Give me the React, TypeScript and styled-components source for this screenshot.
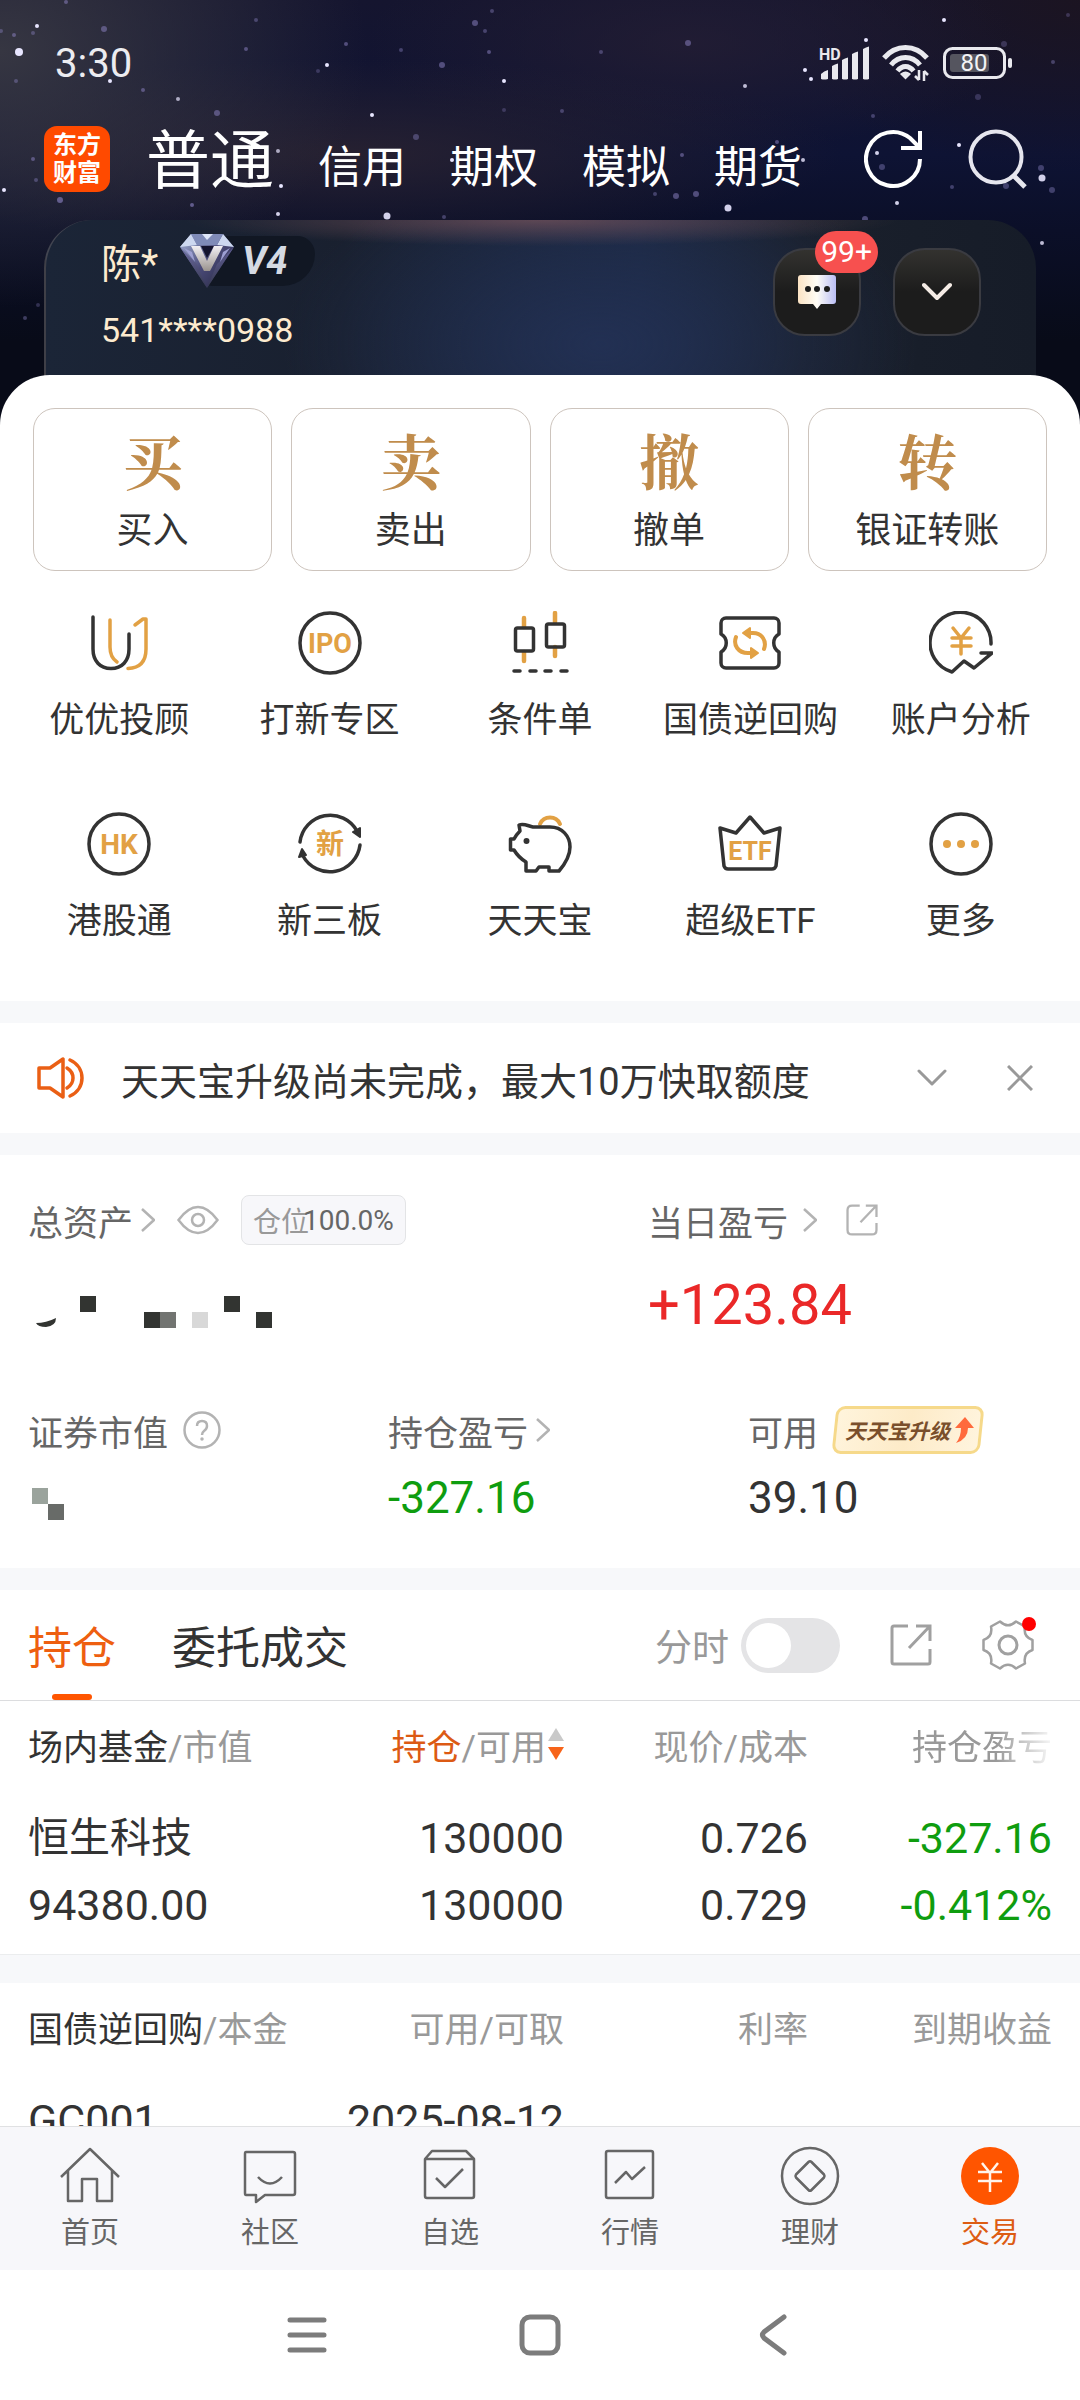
import React from "react";
import styled, { createGlobalStyle, css } from "styled-components";

const INK = "#333333";
const GREY = "#666666";
const MUTED = "#999999";
const BRAND = "#ff5500";
const ACCENT = "#e2a144";
const BAND = "#f7f8fa";

const GlobalStyle = createGlobalStyle`
  *, *::before, *::after { box-sizing: border-box; }
  body {
    margin: 0;
    background: #ffffff;
    color: ${INK};
    font-family: Roboto, "Noto Sans CJK SC", sans-serif;
  }
  button {
    padding: 0;
    border: 0;
    background: none;
    color: inherit;
    font: inherit;
    cursor: pointer;
  }
  a { color: inherit; text-decoration: none; }
  svg { display: block; flex: none; }
`;

/* ---------- page frame ---------- */

const Screen = styled.div`
  display: flex;
  flex-direction: column;
  height: 100vh;
  overflow: hidden;
`;

const Scroll = styled.main`
  flex: 1;
  min-height: 0;
  overflow-y: auto;
  scrollbar-width: none;
  background: ${BAND};
`;

/* ---------- hero ---------- */

const Hero = styled.header`
  position: relative;
  padding-bottom: 52px;
  background:
    radial-gradient(ellipse 34% 60% at 0% 12%, rgba(58, 58, 68, 0.9), transparent),
    radial-gradient(ellipse 46% 22% at 32% 36%, rgba(44, 36, 48, 0.8), transparent),
    radial-gradient(ellipse 30% 26% at 64% 10%, rgba(36, 30, 52, 0.8), transparent),
    radial-gradient(ellipse 30% 40% at 100% 0%, rgba(28, 20, 32, 0.9), transparent),
    linear-gradient(180deg, #15152f 0%, #0e1334 36%, #0b0f28 54%, #080b18 80%);
`;

const Sky = styled.svg`
  position: absolute;
  inset: 0;
  width: 100%;
`;

const StatusBar = styled.div`
  position: relative;
  display: flex;
  align-items: center;
  justify-content: space-between;
  height: 110px;
  padding: 16px 67px 0 55px;
  color: #ececf0;
  font-size: 40px;
`;

const StatusIcons = styled.div`
  display: flex;
  align-items: center;
  gap: 13px;
`;

const TopNav = styled.nav`
  position: relative;
  display: flex;
  align-items: center;
  height: 110px;
  padding: 0 52px 12px 44px;
`;

const Logo = styled.div`
  display: grid;
  place-content: center;
  width: 66px;
  height: 66px;
  border-radius: 13px;
  background: #ff4a00;
  color: #ffffff;
  font-size: 24px;
  font-weight: 700;
  line-height: 28px;
`;

const TopTabs = styled.div`
  display: flex;
  align-items: baseline;
  gap: 44px;
  margin-left: 36px;
  padding-top: 12px;
`;

const TopTab = styled.button<{ $active?: boolean }>`
  color: #ffffff;
  font-size: ${(p) => (p.$active ? 64 : 44)}px;
  line-height: 80px;
`;

const TopActions = styled.div`
  display: flex;
  gap: 44px;
  margin-left: auto;
`;

const AccountCard = styled.section`
  position: relative;
  display: flex;
  justify-content: space-between;
  height: 207px;
  margin: 0 44px -52px;
  padding: 14px 55px 0 55px;
  border-left: 2px solid rgba(140, 130, 130, 0.35);
  border-radius: 48px 48px 0 0;
  background:
    radial-gradient(ellipse 36% 26px at 50% 0%, rgba(120, 84, 92, 0.7), transparent),
    radial-gradient(ellipse 32% 90% at 56% 60%, #223053, transparent),
    linear-gradient(90deg, #1b2537, #19202f 30%, #1b2740 60%, #1a202c 76%, #161c28);
`;

const AccountInfo = styled.div`
  display: flex;
  flex-direction: column;
  gap: 18px;
  color: #fdebcf;
`;

const NameRow = styled.div`
  display: flex;
  align-items: center;
  gap: 22px;
  height: 54px;
  font-size: 40px;
`;

const LevelBadge = styled.span`
  display: flex;
  align-items: center;
  height: 54px;
`;

const LevelText = styled.span`
  margin-left: -28px;
  padding: 0 28px 0 36px;
  border-radius: 8px 24px 44px 8px;
  background: #111723;
  color: #d5dae3;
  font-size: 38px;
  font-style: italic;
  font-weight: 700;
  line-height: 50px;
`;

const DiamondWrap = styled.span`
  position: relative;
  z-index: 1;
`;

const AccountNo = styled.div`
  font-size: 34px;
  line-height: 48px;
`;

const CardActions = styled.div`
  display: flex;
  gap: 32px;
  padding-top: 14px;
`;

const RoundButton = styled.button`
  position: relative;
  display: grid;
  place-items: center;
  width: 88px;
  height: 88px;
  border: 2px solid #3a3b41;
  border-radius: 32px;
  background: linear-gradient(180deg, #33322f, #1c1c1c 50%);
`;

const CountBadge = styled.span`
  position: absolute;
  top: -19px;
  right: -19px;
  padding: 0 6px;
  border-radius: 21px;
  background: #f7504f;
  color: #ffffff;
  font-size: 30px;
  line-height: 42px;
`;

/* ---------- shortcuts ---------- */

const Sheet = styled.section`
  position: relative;
  margin-top: -52px;
  padding: 33px 0 46px;
  border-radius: 50px 50px 0 0;
  background: #ffffff;
`;

const TradeGrid = styled.div`
  display: grid;
  grid-template-columns: repeat(4, 1fr);
  gap: 19px;
  padding: 0 33px;
`;

const TradeButton = styled.button`
  display: flex;
  flex-direction: column;
  align-items: center;
  height: 163px;
  padding-top: 5px;
  border: 1px solid #cdc4bd;
  border-radius: 22px;
  font-size: 36px;
  line-height: 54px;
`;

const TradeGlyph = styled.span`
  color: #c08c4c;
  font-family: "Noto Serif CJK SC", "Noto Sans CJK SC", serif;
  font-size: 60px;
  font-weight: 700;
  line-height: 90px;
`;

const AppGrid = styled.div`
  display: grid;
  grid-template-columns: repeat(5, 1fr);
  row-gap: 58px;
  padding: 40px 14px 0;
`;

const AppLink = styled.a`
  display: flex;
  flex-direction: column;
  align-items: center;
  gap: 12px;
  font-size: 35px;
  line-height: 67px;
  white-space: nowrap;
`;

/* ---------- notice ---------- */

const Notice = styled.section`
  display: flex;
  align-items: center;
  height: 110px;
  margin-top: 22px;
  padding: 0 47px 0 37px;
  background: #ffffff;
`;

const NoticeText = styled.p`
  flex: 1;
  margin: 0 0 0 36px;
  font-size: 38px;
  white-space: nowrap;
`;

const NoticeActions = styled.div`
  display: flex;
  align-items: center;
  gap: 60px;
`;

/* ---------- assets ---------- */

const Assets = styled.section`
  height: 413px;
  margin-top: 22px;
  padding-top: 35px;
  background: #ffffff;
`;

const AssetRow = styled.div<{ $columns: string }>`
  display: grid;
  grid-template-columns: ${(p) => p.$columns};
  & + & { margin-top: 40px; }
`;

const AssetCell = styled.div`
  padding-left: 28px;
`;

const AssetLabel = styled.div<{ $gap?: number }>`
  display: flex;
  align-items: center;
  gap: ${(p) => p.$gap || 8}px;
  height: 60px;
  color: ${GREY};
  font-size: 35px;
`;

const Spaced = styled.span`
  display: flex;
  margin-left: 14px;
`;

const AssetValue = styled.div<{ $large?: boolean; $tone?: string }>`
  display: flex;
  align-items: center;
  height: ${(p) => (p.$large ? 110 : 76)}px;
  color: ${(p) => p.$tone || INK};
  font-size: ${(p) => (p.$large ? 56 : 44)}px;
`;

const PositionTag = styled.span`
  display: flex;
  align-items: center;
  height: 50px;
  margin-left: 14px;
  padding: 0 11px;
  border: 1px solid #e3e4e6;
  border-radius: 8px;
  background: #f7f7fa;
  color: ${GREY};
  font-size: 28px;
`;

const PositionWord = styled.span`
  margin-right: -6px;
  color: ${MUTED};
`;

const UpgradeButton = styled.button`
  position: relative;
  display: flex;
  align-items: center;
  gap: 4px;
  height: 48px;
  margin-left: 8px;
  padding: 0 8px 0 11px;
  color: #7a4f2c;
  font-size: 21px;
  font-style: italic;
  font-weight: 700;
  white-space: nowrap;
  isolation: isolate;
  &::before {
    content: "";
    position: absolute;
    inset: 0;
    z-index: -1;
    border: 3px solid #f6d98a;
    border-radius: 9px;
    background: linear-gradient(100deg, #fff4dc, #fdebc8 50%, #fff4de);
    transform: skewX(-6deg);
  }
`;

/* ---------- holdings ---------- */

const Panel = styled.section`
  margin-top: 22px;
  border-bottom: 1px solid #ebedee;
  background: #ffffff;
`;

const NextPanel = styled(Panel)`
  margin-top: 28px;
`;

const TabBar = styled.div`
  display: flex;
  align-items: center;
  height: 111px;
  padding: 0 46px 0 28px;
  border-bottom: 1px solid #dcdddf;
`;

const Tab = styled.button<{ $active?: boolean }>`
  position: relative;
  height: 110px;
  margin-right: 56px;
  color: ${(p) => (p.$active ? "#ee5f10" : INK)};
  font-size: 44px;
  ${(p) =>
    p.$active &&
    css`
      &::after {
        content: "";
        position: absolute;
        bottom: 0;
        left: calc(50% - 20px);
        width: 40px;
        height: 6px;
        border-radius: 3px;
        background: ${BRAND};
      }
    `}
`;

const TabTools = styled.div`
  display: flex;
  align-items: center;
  gap: 50px;
  margin-left: auto;
`;

const SwitchLabel = styled.label`
  display: flex;
  align-items: center;
  gap: 12px;
  color: ${MUTED};
  font-size: 37px;
`;

const Switch = styled.input`
  width: 99px;
  height: 55px;
  margin: 0;
  padding: 5px;
  border-radius: 28px;
  background: #e4e4e6;
  appearance: none;
  &::before {
    content: "";
    display: block;
    width: 45px;
    height: 45px;
    border-radius: 50%;
    background: #ffffff;
  }
  &:checked { background: ${BRAND}; }
  &:checked::before { margin-left: auto; }
`;

const GearButton = styled.button`
  position: relative;
`;

const RedDot = styled.span`
  position: absolute;
  top: -3px;
  right: -2px;
  width: 14px;
  height: 14px;
  border-radius: 50%;
  background: #ff0000;
`;

const Table = styled.table`
  width: 100%;
  padding: 0 28px;
  border-collapse: separate;
  border-spacing: 0;
  table-layout: fixed;
`;

const Col = styled.col<{ $width?: number }>`
  ${(p) => p.$width && css`width: ${p.$width}px;`}
`;

const Th = styled.th`
  height: 86px;
  padding: 0;
  color: ${MUTED};
  font-size: 35px;
  font-weight: 400;
  text-align: right;
  white-space: nowrap;
  &:first-child { text-align: left; }
`;

const Strong = styled.span<{ $sorted?: boolean }>`
  color: ${(p) => (p.$sorted ? "#dc5a14" : INK)};
`;

const SortButton = styled.button`
  display: inline-flex;
  align-items: center;
  gap: 2px;
`;

const FadeOut = styled.span`
  mask-image: linear-gradient(90deg, #000 60%, rgba(0, 0, 0, 0.08));
`;

const Td = styled.td<{ $tone?: string }>`
  padding: 18px 0 15px;
  color: ${(p) => p.$tone || INK};
  font-size: 43px;
  line-height: 67px;
  text-align: right;
  white-space: nowrap;
  &:first-child { text-align: left; }
`;

const Line = styled.div``;

const FundName = styled.div`
  font-size: 41px;
`;

/* ---------- bottom bars ---------- */

const BottomNav = styled.nav`
  display: grid;
  grid-template-columns: repeat(6, 1fr);
  height: 144px;
  padding-top: 19px;
  border-top: 1px solid #e0e1e3;
  background: #f7f7fa;
`;

const BottomLink = styled.a<{ $active?: boolean }>`
  display: flex;
  flex-direction: column;
  align-items: center;
  gap: 6px;
  color: ${(p) => (p.$active ? "#dd5c12" : GREY)};
  font-size: 29px;
  line-height: 42px;
`;

const SystemNav = styled.div`
  display: grid;
  grid-template-columns: repeat(3, 1fr);
  place-items: center;
  height: 130px;
  padding: 0 190px;
  background: #ffffff;
`;

/* ---------- drawings ---------- */

const STARS: [number, number, number, number][] = [
  [19, 52, 4, 1], [37, 26, 2, 1], [14, 35, 2, 0.5], [33, 33, 2, 0.4], [1, 31, 2, 0.4], [104, 29, 3, 0.5], [143, 90, 2, 0.5],
  [178, 99, 2, 0.7], [217, 113, 3, 0.5], [246, 49, 2, 0.5], [327, 65, 2, 1], [318, 71, 2, 0.3],
  [346, 44, 2, 0.5], [372, 115, 2, 1], [442, 65, 3, 0.5], [475, 23, 3, 0.5], [485, 31, 2, 0.4], [504, 81, 2, 1],
  [489, 52, 2, 0.5], [492, 11, 2, 0.4], [416, 137, 3, 0.4], [387, 216, 3.5, 0.9], [278, 214, 2, 0.9],
  [281, 186, 2, 1], [278, 151, 2, 0.7], [60, 200, 3, 0.6], [4, 190, 2, 1], [33, 159, 2, 0.5], [110, 81, 2, 1],
  [192, 205, 2, 0.6], [16, 81, 2, 0.4], [36, 180, 2, 0.4], [256, 20, 2, 0.4], [401, 50, 2, 0.4], [66, 2, 2, 0.5], [25, 318, 2, 0.4],
  [38, 305, 2, 0.3], [504, 110, 2, 0.3], [452, 160, 2, 1], [444, 217, 2, 0.4], [688, 43, 3, 0.5],
  [601, 52, 2, 0.4], [745, 86, 2, 0.8], [805, 70, 2, 1], [811, 79, 2, 1], [866, 40, 2, 1], [944, 20, 2, 1],
  [1004, 44, 3, 0.3], [959, 145, 2, 1], [1042, 178, 3.5, 0.9], [1041, 168, 3, 0.4], [1052, 190, 3, 0.4], [728, 208, 3.5, 0.9],
  [897, 203, 2, 0.9], [803, 160, 2, 0.8], [682, 155, 2, 0.5], [696, 194, 3, 0.5], [676, 196, 3, 0.5], [655, 194, 2, 0.4],
  [562, 111, 2, 0.4], [873, 116, 2, 0.4], [978, 97, 3, 0.3], [1042, 243, 2, 0.8], [865, 219, 3, 0.5],
  [877, 153, 2, 0.9], [882, 167, 3, 0.4], [777, 142, 2, 0.5], [1068, 15, 2, 0.3], [1053, 62, 2, 0.4], [1006, 186, 3, 0.4], [952, 187, 2, 0.4],
];

const Starfield = () => (
  <Sky viewBox="0 0 1080 375" aria-hidden="true">
    {STARS.map(([x, y, r, o]) => (
      <circle key={`${x}-${y}`} cx={x} cy={y} r={r} fill={o > 0.6 ? "#e8e6ff" : "#8f86c8"} opacity={o} />
    ))}
  </Sky>
);

const SignalIcon = () => (
  <svg width="50" height="34" viewBox="0 0 50 34" fill="#e9e9ee">
    <text x="0" y="14" fontSize="16" fontWeight="700" fontFamily="Roboto">HD</text>
    <path d="M2 33v-5q3-3 7-4v9q-4 1-7 0ZM13 33V20q3-2 6-2.500v15.500q-3 1-6 0ZM23 33V14q3-2 6-2.500v21.500q-3 1-6 0ZM33 33V8q3-2 6-2.500v27.500q-3 1-6 0ZM44 33V3q3-2 6-2.500v32.500q-3 1-6 0Z" />
  </svg>
);

const WifiIcon = () => (
  <svg width="48" height="36" viewBox="0 0 48 36" fill="none" stroke="#e9e9ee" strokeWidth="5">
    <path d="M2 13C14-1 33-1 45 13" />
    <path d="M9 20C17 10 30 10 38 20" />
    <path d="M15.500 26C20 20 27 20 31.500 26" />
    <path d="M23.500 33l-4-4q4-3 8 0Z" fill="#e9e9ee" strokeWidth="2" />
    <path d="M37 25v10M42 36V26M37 35l-4-4M42 26l4 4" strokeWidth="2.500" />
  </svg>
);

const BatteryIcon = () => (
  <svg width="70" height="32" viewBox="0 0 70 32">
    <rect x="1.500" y="1.500" width="60" height="29" rx="8" fill="none" stroke="#e9e9ee" strokeWidth="3" />
    <rect x="7" y="7" width="39" height="18" rx="3" fill="#55555f" />
    <rect x="65" y="11" width="4" height="10" rx="2" fill="#e9e9ee" />
    <text x="31" y="24" textAnchor="middle" fontSize="24" fill="#f2f2f5" fontFamily="Roboto">80</text>
  </svg>
);

const RefreshIcon = () => (
  <svg width="60" height="60" viewBox="0 0 60 60" fill="none" stroke="#ffffff" strokeWidth="4">
    <path d="M56 30A27 27 0 1 1 46 9L55 18" />
    <path d="M56 2V19H37" />
  </svg>
);

const SearchIcon = () => (
  <svg width="60" height="60" viewBox="0 0 60 60" fill="none" stroke="#e6e6ee" strokeWidth="4">
    <circle cx="28" cy="28" r="25.500" />
    <path d="M45 46L57 58" strokeWidth="5" />
  </svg>
);

const DiamondIcon = () => (
  <svg width="54" height="54" viewBox="0 0 54 54">
    <defs>
      <linearGradient id="gem" x1="0" y1="0" x2="1" y2="1">
        <stop offset="0" stopColor="#a9b8dc" />
        <stop offset="0.500" stopColor="#4a4a78" />
        <stop offset="1" stopColor="#23243c" />
      </linearGradient>
      <linearGradient id="gemV" x1="0" y1="0" x2="0" y2="1">
        <stop offset="0" stopColor="#f2f0f4" />
        <stop offset="1" stopColor="#9a938e" />
      </linearGradient>
      <linearGradient id="gemTip" x1="0" y1="0" x2="0" y2="1">
        <stop offset="0" stopColor="#6a67a0" />
        <stop offset="1" stopColor="#34374c" />
      </linearGradient>
    </defs>
    <path d="M11 0H43L54 13L27 54L0 13Z" fill="url(#gem)" />
    <path d="M11 0L17 11L0 13ZM43 0L37 11L54 13Z" fill="#cdd8f0" />
    <path d="M17 11H37L43 0H11Z" fill="#7f8bb8" />
    <path d="M22 0L27 6L33 0Z" fill="#dfe7fa" />
    <path d="M0 13L17 30L27 54ZM54 13L37 30L27 54Z" fill="url(#gemTip)" opacity="0.800" />
    <path d="M4 14L12 18L15 28ZM50 14L43 18L40 28Z" fill="#9d9fd2" />
    <path d="M21 12H34L27 24Z" fill="#14142e" />
    <path d="M11 12H20L27 27L34 12H43L30 37H24Z" fill="url(#gemV)" />
  </svg>
);

const ChatIcon = () => (
  <svg width="40" height="36" viewBox="0 0 40 36">
    <defs>
      <linearGradient id="chat">
        <stop offset="0" stopColor="#fbe3c4" />
        <stop offset="0.500" stopColor="#fffdf6" />
        <stop offset="1" stopColor="#b9bdf5" />
      </linearGradient>
    </defs>
    <path d="M4 1H36a3 3 0 0 1 3 3V27a3 3 0 0 1-3 3H24L20 35L16 30H4a3 3 0 0 1-3-3V4a3 3 0 0 1 3-3Z" fill="url(#chat)" />
    <g fill="#1c1c1c"><circle cx="11" cy="15" r="3" /><circle cx="20" cy="15" r="3" /><circle cx="30" cy="15" r="3" /></g>
  </svg>
);

const ChevronDown = ({ color, width = 3 }: { color: string; width?: number }) => (
  <svg width="30" height="20" viewBox="0 0 30 20" fill="none" stroke={color} strokeWidth={width} strokeLinecap="round" strokeLinejoin="round">
    <path d="M2 3L15 16L28 3" />
  </svg>
);

const ChevronRight = () => (
  <svg width="14" height="24" viewBox="0 0 14 24" fill="none" stroke="#b3b3b3" strokeWidth="2.500" strokeLinejoin="round">
    <path d="M1 1L13 12L1 23" />
  </svg>
);

const CloseIcon = () => (
  <svg width="26" height="26" viewBox="0 0 26 26" stroke={MUTED} strokeWidth="3">
    <path d="M1 1L25 25M25 1L1 25" />
  </svg>
);

const SpeakerIcon = () => (
  <svg width="48" height="48" viewBox="0 0 48 48" fill="none" stroke="#ea5f14" strokeWidth="3.500" strokeLinejoin="round">
    <path d="M2 14H13L26 5V43L13 34H2Z" />
    <path d="M30 14C38 19 38 29 30 34M33 6C49 13 49 35 33 42" strokeLinecap="round" />
  </svg>
);

const EyeIcon = () => (
  <svg width="42" height="30" viewBox="0 0 42 30" fill="none" stroke="#b3b3b3" strokeWidth="2.500">
    <path d="M1.500 15Q11 2 21 2T40.500 15Q31 28 21 28T1.500 15Z" />
    <circle cx="21" cy="15" r="6" />
  </svg>
);

const ShareIcon = ({ size, color, round }: { size: number; color: string; round: number }) => (
  <svg width={size} height={size} viewBox="0 0 42 42" fill="none" stroke={color} strokeWidth="3">
    <path d={`M18 2H${2 + round}Q2 2 2 ${2 + round}V${40 - round}Q2 40 ${2 + round} 40H${40 - round}Q40 40 40 ${40 - round}V25`} />
    <path d="M26 2H40V17M40 2L19 24" />
  </svg>
);

const HelpIcon = () => (
  <svg width="38" height="38" viewBox="0 0 38 38" fill="none" stroke="#b3b3b3" strokeWidth="2.500">
    <circle cx="19" cy="19" r="17.500" />
    <path d="M14 15Q14 10 19 10T24 15Q24 18 21 20Q19 21.500 19 24" />
    <circle cx="19" cy="28" r="1" fill="#b3b3b3" strokeWidth="1.500" />
  </svg>
);

const UpArrow = () => (
  <svg width="20" height="26" viewBox="0 0 20 26">
    <path d="M11 0L20 11H14Q14 22 2 26Q7 20 7 11H1Z" fill="#ff6a3d" />
  </svg>
);

const GearIcon = () => (
  <svg width="52" height="50" viewBox="-26 -25 52 50" fill="none" stroke="#a0a0a0" strokeWidth="2.500" strokeLinejoin="round">
    <path d="M-8-23.500Q0-16 8-23.500L17-18.500Q15-8 24.500-5V5Q15 8 17 18.500L8 23.500Q0 16-8 23.500L-17 18.500Q-15 8-24.500 5V-5Q-15-8-17-18.500Z" />
    <circle r="9" strokeWidth="3" />
  </svg>
);

const SortIcon = () => (
  <svg width="16" height="32" viewBox="0 0 16 32">
    <path d="M8 0L16 13H0Z" fill="#c9c9c9" />
    <path d="M8 32L16 19H0Z" fill="#f7641a" />
  </svg>
);

const TotalMosaic = () => (
  <svg width="250" height="46" viewBox="28 1282 250 46" role="img" aria-label="总资产已遮挡">
    <path d="M36 1323Q46 1323 56 1318Q56 1326 46 1327Q38 1327 36 1323Z" fill="#323431" />
    <g fill="#323431">
      <rect x="80" y="1296" width="16" height="16" />
      <rect x="144" y="1312" width="16" height="16" />
      <rect x="224" y="1296" width="16" height="16" />
      <rect x="256" y="1312" width="16" height="16" />
    </g>
    <rect x="160" y="1312" width="16" height="16" fill="#727471" />
    <rect x="192" y="1312" width="16" height="16" fill="#d8d8d8" />
  </svg>
);

const ValueMosaic = () => (
  <svg width="36" height="46" viewBox="0 0 36 46" role="img" aria-label="证券市值已遮挡">
    <rect x="4" y="13" width="16" height="16" fill="#9aa39c" />
    <rect x="20" y="29" width="16" height="16" fill="#686b68" />
  </svg>
);

const AppIcon = ({ children }: { children: React.ReactNode }) => (
  <svg width="64" height="64" viewBox="0 0 64 64" fill="none" stroke={INK} strokeWidth="3.500" strokeLinecap="round" strokeLinejoin="round">
    {children}
  </svg>
);

const IconWord = ({ y, size, children }: { y: number; size: number; children: string }) => (
  <text x="32" y={y} textAnchor="middle" fontSize={size} fontWeight="700" fill={ACCENT} stroke="none">{children}</text>
);

const APPS: { label: string; icon: React.ReactNode }[] = [
  {
    label: "优优投顾",
    icon: (
      <>
        <path d="M6 6V38C6 50 13 57.500 24 57.500S42 50 42 38V23" />
        <path d="M23 9V36C23 43 25.500 48 30 51M48 14L56 8H59V38C59 50 53 57 41 57.500" stroke={ACCENT} />
      </>
    ),
  },
  { label: "打新专区", icon: <><circle cx="32" cy="32" r="30" /><IconWord y={42} size={27}>IPO</IconWord></> },
  {
    label: "条件单",
    icon: (
      <>
        <path d="M16 7V16M16 41V50M47 2V11M47 36V45" stroke={ACCENT} strokeWidth="4.500" />
        <rect x="7.500" y="17" width="18" height="23" rx="2" />
        <rect x="38.500" y="13" width="18" height="23" rx="2" />
        <path d="M6 60H12M22 60H28M37 60H43M53 60H59" />
      </>
    ),
  },
  {
    label: "国债逆回购",
    icon: (
      <>
        <path d="M8 7H56a5 5 0 0 1 5 5V23c-7 4-7 14 0 18V52a5 5 0 0 1-5 5H8a5 5 0 0 1-5-5V41c7-4 7-14 0-18V12a5 5 0 0 1 5-5Z" />
        <g stroke={ACCENT} strokeWidth="4">
          <path d="M18 26C15 34 20 42 30 42H34M46 38C49 30 44 22 35 22H30" />
          <path d="M32 17V27L25 22ZM33 37V47L40 42Z" fill={ACCENT} strokeWidth="2" />
        </g>
      </>
    ),
  },
  {
    label: "账户分析",
    icon: (
      <>
        <path d="M62 33A30.500 30.500 0 1 0 23 61L35 50L45 57L63 42H52" />
        <path d="M24 17L32 27L40 17M32 27V43M23 27H42M23 35H42" stroke={ACCENT} />
      </>
    ),
  },
  { label: "港股通", icon: <><circle cx="32" cy="32" r="30" /><IconWord y={42} size={28}>HK</IconWord></> },
  {
    label: "新三板",
    icon: (
      <>
        <path d="M2 30A30.500 30.500 0 0 1 59 19M62 33A30.500 30.500 0 0 1 5 44" />
        <path d="M55 20L62 16V25ZM4 37L1 45L8 43Z" fill={INK} strokeWidth="2" />
        <IconWord y={42} size={28}>新</IconWord>
      </>
    ),
  },
  {
    label: "天天宝",
    icon: (
      <>
        <path d="M32 12A11 11 0 0 1 52 12" stroke={ACCENT} strokeWidth="4" />
        <path d="M11 13c5-2 9 1 14 2h17c12 0 20 9 20 20 0 9-5 17-11 24H41v-4H31l-3 4H18V50c-5-3-9-7-12-12H2.500V27H6c2-4 4-6 6-8Z" />
        <circle cx="18.500" cy="29" r="2" fill={INK} strokeWidth="2" />
      </>
    ),
  },
  {
    label: "超级ETF",
    icon: (
      <>
        <path d="M2 16L18 21L32 5L46 21L62 16L58 54Q57 57 54 57H10Q7 57 6 54Z" />
        <IconWord y={48} size={25}>ETF</IconWord>
      </>
    ),
  },
  {
    label: "更多",
    icon: (
      <>
        <circle cx="32" cy="32" r="30" />
        <g fill={ACCENT} stroke="none"><circle cx="18" cy="32" r="4" /><circle cx="32" cy="32" r="4" /><circle cx="46" cy="32" r="4" /></g>
      </>
    ),
  },
];

const TRADES = [["买", "买入"], ["卖", "卖出"], ["撤", "撤单"], ["转", "银证转账"]];

const NAV: { label: string; active?: boolean; icon: React.ReactNode }[] = [
  { label: "首页", icon: <path d="M1 31L30 3L59 31M8 25V55H22V33H37V55H52V25" /> },
  { label: "社区", icon: <><path d="M6 6H53Q55 6 55 8V47Q55 49 53 49H25L16 56V49H6Q5 49 5 47V8Q5 6 6 6Z" /><path d="M18 31Q30 44 42 31" /></> },
  { label: "自选", icon: <><path d="M5 13L12 5H46L54 13V50Q54 52 52 52H7Q5 52 5 50ZM5 13H54" /><path d="M16 32L25 41L43 23" /></> },
  { label: "行情", icon: <><rect x="6" y="5" width="47" height="47" rx="2" /><path d="M15 37L26 26L32 33L45 21" /></> },
  { label: "理财", icon: <><circle cx="30" cy="30" r="28" /><path d="M28.500 16Q30 14.500 31.500 16L44 28.500Q45 30 44 31.500L31.500 44Q30 45.500 28.500 44L16 31.500Q15 30 16 28.500Z" /></> },
  {
    label: "交易",
    active: true,
    icon: <><circle cx="30" cy="30" r="29" fill={BRAND} stroke="none" /><path d="M22 17L30 27L38 17M30 27V46M18 26H42M18 35H42" stroke="#fff4ec" /></>,
  },
];

const Columns = () => (
  <colgroup><Col /><Col $width={286} /><Col $width={244} /><Col $width={244} /></colgroup>
);

export default function App() {
  return (
    <Screen>
      <GlobalStyle />
      <Scroll>
        <Hero>
          <Starfield />
          <StatusBar>
            <span>3:30</span>
            <StatusIcons><SignalIcon /><WifiIcon /><BatteryIcon /></StatusIcons>
          </StatusBar>
          <TopNav>
            <Logo><span>东方</span><span>财富</span></Logo>
            <TopTabs>
              <TopTab $active>普通</TopTab>
              <TopTab>信用</TopTab>
              <TopTab>期权</TopTab>
              <TopTab>模拟</TopTab>
              <TopTab>期货</TopTab>
            </TopTabs>
            <TopActions>
              <button aria-label="刷新"><RefreshIcon /></button>
              <button aria-label="搜索"><SearchIcon /></button>
            </TopActions>
          </TopNav>
          <AccountCard>
            <AccountInfo>
              <NameRow>
                <span>陈*</span>
                <LevelBadge>
                  <DiamondWrap><DiamondIcon /></DiamondWrap>
                  <LevelText>V4</LevelText>
                </LevelBadge>
              </NameRow>
              <AccountNo>541****0988</AccountNo>
            </AccountInfo>
            <CardActions>
              <RoundButton aria-label="消息"><ChatIcon /><CountBadge>99+</CountBadge></RoundButton>
              <RoundButton aria-label="展开"><ChevronDown color="#f5ece6" width={4} /></RoundButton>
            </CardActions>
          </AccountCard>
        </Hero>

        <Sheet>
          <TradeGrid>
            {TRADES.map(([glyph, label]) => (
              <TradeButton key={label}><TradeGlyph>{glyph}</TradeGlyph>{label}</TradeButton>
            ))}
          </TradeGrid>
          <AppGrid>
            {APPS.map((app) => (
              <AppLink key={app.label} href="#"><AppIcon>{app.icon}</AppIcon>{app.label}</AppLink>
            ))}
          </AppGrid>
        </Sheet>

        <Notice>
          <SpeakerIcon />
          <NoticeText>天天宝升级尚未完成，最大10万快取额度</NoticeText>
          <NoticeActions>
            <button aria-label="展开公告"><ChevronDown color={MUTED} /></button>
            <button aria-label="关闭公告"><CloseIcon /></button>
          </NoticeActions>
        </Notice>

        <Assets>
          <AssetRow $columns="31fr 23fr">
            <AssetCell>
              <AssetLabel>
                总资产<ChevronRight />
                <Spaced><EyeIcon /></Spaced>
                <PositionTag><PositionWord>仓位</PositionWord>100.0%</PositionTag>
              </AssetLabel>
              <AssetValue $large><TotalMosaic /></AssetValue>
            </AssetCell>
            <AssetCell>
              <AssetLabel $gap={15}>
                当日盈亏<ChevronRight />
                <Spaced><ShareIcon size={32} color="#b3b3b3" round={6} /></Spaced>
              </AssetLabel>
              <AssetValue $large $tone="#ea2828">+123.84</AssetValue>
            </AssetCell>
          </AssetRow>
          <AssetRow $columns="1fr 1fr 1fr">
            <AssetCell>
              <AssetLabel $gap={15}>证券市值<HelpIcon /></AssetLabel>
              <AssetValue><ValueMosaic /></AssetValue>
            </AssetCell>
            <AssetCell>
              <AssetLabel>持仓盈亏<ChevronRight /></AssetLabel>
              <AssetValue $tone="#0f9d0f">-327.16</AssetValue>
            </AssetCell>
            <AssetCell>
              <AssetLabel>可用<UpgradeButton>天天宝升级<UpArrow /></UpgradeButton></AssetLabel>
              <AssetValue>39.10</AssetValue>
            </AssetCell>
          </AssetRow>
        </Assets>

        <Panel>
          <TabBar>
            <Tab $active>持仓</Tab>
            <Tab>委托成交</Tab>
            <TabTools>
              <SwitchLabel htmlFor="intraday">分时<Switch id="intraday" type="checkbox" role="switch" /></SwitchLabel>
              <button aria-label="分享"><ShareIcon size={42} color="#a0a0a0" round={2} /></button>
              <GearButton aria-label="设置"><GearIcon /><RedDot /></GearButton>
            </TabTools>
          </TabBar>
          <Table>
            <Columns />
            <thead>
              <tr>
                <Th><Strong>场内基金</Strong>/市值</Th>
                <Th><SortButton><span><Strong $sorted>持仓</Strong>/可用</span><SortIcon /></SortButton></Th>
                <Th>现价/成本</Th>
                <Th><FadeOut>持仓盈亏</FadeOut></Th>
              </tr>
            </thead>
            <tbody>
              <tr>
                <Td><FundName>恒生科技</FundName><Line>94380.00</Line></Td>
                <Td><Line>130000</Line><Line>130000</Line></Td>
                <Td><Line>0.726</Line><Line>0.729</Line></Td>
                <Td $tone="#0f9d0f"><Line>-327.16</Line><Line>-0.412%</Line></Td>
              </tr>
            </tbody>
          </Table>
        </Panel>

        <NextPanel>
          <Table>
            <Columns />
            <thead>
              <tr>
                <Th><Strong>国债逆回购</Strong>/本金</Th>
                <Th>可用/可取</Th>
                <Th>利率</Th>
                <Th>到期收益</Th>
              </tr>
            </thead>
            <tbody>
              <tr><Td>GC001</Td><Td>2025-08-12</Td><Td /><Td /></tr>
            </tbody>
          </Table>
        </NextPanel>
      </Scroll>

      <BottomNav>
        {NAV.map((item) => (
          <BottomLink key={item.label} href="#" $active={item.active}>
            <svg width="60" height="60" viewBox="0 0 60 60" fill="none" stroke={GREY} strokeWidth="2.500" strokeLinejoin="round">{item.icon}</svg>
            {item.label}
          </BottomLink>
        ))}
      </BottomNav>
      <SystemNav>
        <button aria-label="最近任务">
          <svg width="40" height="40" viewBox="0 0 40 40" stroke="#7c7c7c" strokeWidth="5" strokeLinecap="round"><path d="M3 5H37M3 20H37M3 35H37" /></svg>
        </button>
        <button aria-label="主屏幕">
          <svg width="42" height="42" viewBox="0 0 42 42" fill="none" stroke="#7c7c7c" strokeWidth="5"><rect x="3" y="3" width="36" height="36" rx="8" /></svg>
        </button>
        <button aria-label="返回">
          <svg width="30" height="42" viewBox="0 0 30 42" fill="none" stroke="#7c7c7c" strokeWidth="5" strokeLinecap="round"><path d="M26 3L6 18Q3 21 6 24L26 39" /></svg>
        </button>
      </SystemNav>
    </Screen>
  );
}
